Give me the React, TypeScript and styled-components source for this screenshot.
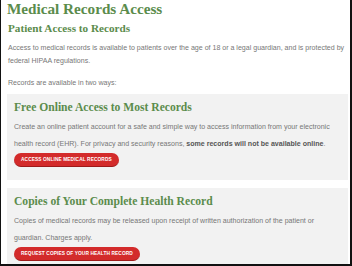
import React from "react";
import styled, { createGlobalStyle } from "styled-components";

const GlobalStyle = createGlobalStyle`
  html, body {
    margin: 0;
    padding: 0;
    background: #ffffff;
  }
`;

const Frame = styled.div`
  box-sizing: border-box;
  width: 352px;
  height: 266px;
  overflow: hidden;
  border-left: 1px solid #111;
  border-right: 2px solid #111;
  border-bottom: 2px solid #111;
  padding: 0 2px 0 6px;
  font-family: "Liberation Sans", Arial, sans-serif;
  color: #777;
`;

const Title = styled.h1`
  margin: 0;
  font-family: "Liberation Serif", "Times New Roman", serif;
  font-weight: 600;
  font-size: 15.2px;
  line-height: 18px;
  color: #5b8c4c;
`;

const SubTitle = styled.h2`
  margin: 3px 0 0 1px;
  font-family: "Liberation Serif", "Times New Roman", serif;
  font-weight: 600;
  font-size: 11.2px;
  line-height: 14px;
  color: #5b8c4c;
`;

const Para = styled.p<{ $top: number }>`
  margin: ${(p) => p.$top}px 0 0 1px;
  font-size: 7.05px;
  line-height: 13px;
  color: #777;
`;

const Card = styled.section<{ $gap: number }>`
  margin-top: ${(p) => p.$gap}px;
  background: #f2f2f2;
  padding: 7px 6px 13.5px 7px;
`;

const CardTitle = styled.h3`
  margin: 0;
  font-family: "Liberation Serif", "Times New Roman", serif;
  font-weight: 600;
  font-size: 11.6px;
  line-height: 14px;
  color: #5b8c4c;
`;

const CardText = styled.p`
  margin: 3px 0 0;
  font-size: 7.05px;
  line-height: 17px;
  color: #777;

  strong {
    color: #555;
    font-weight: bold;
  }
`;

const PillButton = styled.button`
  display: block;
  box-sizing: border-box;
  height: 14px;
  margin-top: 1px;
  border: none;
  border-bottom: 1px solid #9e1a1a;
  border-radius: 8px;
  background: #d32b2b;
  color: #fff;
  font-family: "Liberation Sans", Arial, sans-serif;
  font-weight: bold;
  font-size: 4.8px;
  letter-spacing: 0.1px;
  line-height: 13px;
  padding: 0 7px;
  cursor: pointer;
`;

export default function App() {
  return (
    <>
      <GlobalStyle />
      <Frame>
        <Title>Medical Records Access</Title>
        <SubTitle>Patient Access to Records</SubTitle>
        <Para $top={6}>
          Access to medical records is available to patients over the age of
          18 or a legal guardian, and is protected by federal HIPAA
          regulations.
        </Para>
        <Para $top={8.5}>Records are available in two ways:</Para>

        <Card $gap={5}>
          <CardTitle>Free Online Access to Most Records</CardTitle>
          <CardText>
            Create an online patient account for a safe and simple way to
            access information from your electronic health record (EHR). For
            privacy and security reasons,{" "}
            <strong>some records will not be available online</strong>.
          </CardText>
          <PillButton>ACCESS ONLINE MEDICAL RECORDS</PillButton>
        </Card>

        <Card $gap={8}>
          <CardTitle>Copies of Your Complete Health Record</CardTitle>
          <CardText>
            Copies of medical records may be released upon receipt of written
            authorization of the patient or guardian. Charges apply.
          </CardText>
          <PillButton>REQUEST COPIES OF YOUR HEALTH RECORD</PillButton>
        </Card>
      </Frame>
    </>
  );
}
